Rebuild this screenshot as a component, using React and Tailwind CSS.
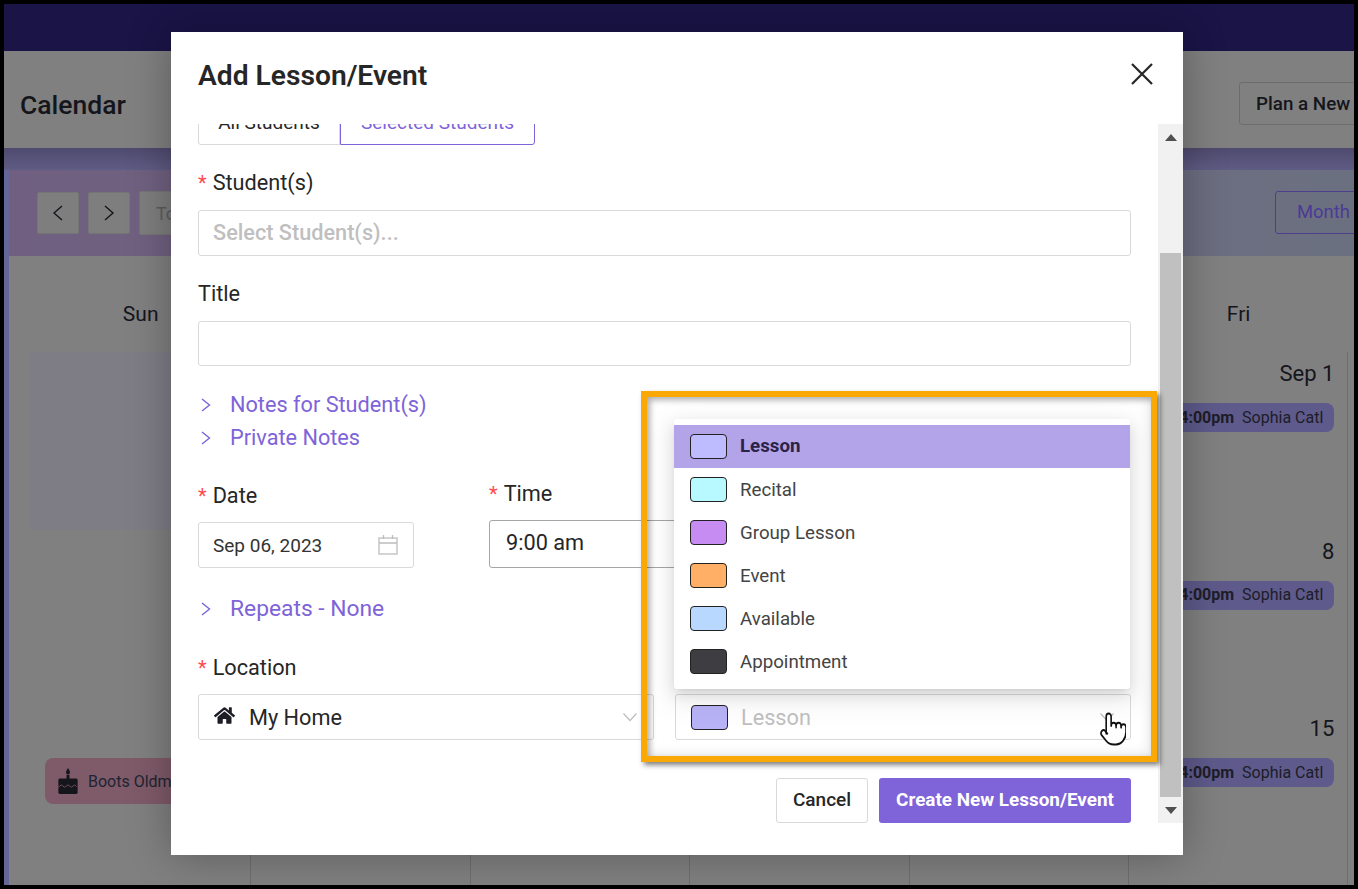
import React from 'react';
import { FaHome } from 'react-icons/fa';

const Chev = () => (
  <svg width="12" height="16" viewBox="0 0 12 16" fill="none" stroke="#7e63d9" strokeWidth="1.4" className="shrink-0"><path d="M2 2l7.5 6L2 14" /></svg>
);
const Down = ({ c = '#bdbdbd' }) => (
  <svg width="16" height="10" viewBox="0 0 16 10" fill="none" stroke={c} strokeWidth="1.2"><path d="M1.5 1.5L8 8.5l6.5-7" /></svg>
);
const Req = () => <span className="text-[#ff4d4f] mr-[6px] text-[20px]">*</span>;

const Fold = ({ children, cls }) => (
  <div className={`flex items-center h-[30px] pt-[2px] text-[#7e63d9] ${cls}`}>
    <span className="w-[32px] flex pl-[2px]"><Chev /></span>
    {children}
  </div>
);

const Pill = () => (
  <div className="ml-auto mr-[13px] mt-[16px] h-[29px] w-[200px] rounded-[8px] bg-[#5e5a8b] flex items-center justify-end pr-[11px] text-[16px] text-[#1d1d28] whitespace-nowrap overflow-hidden">
    <b className="font-bold mr-[8px]">4:00pm</b>Sophia Catl
  </div>
);

const Cake = () => (
  <svg width="22" height="26" viewBox="0 0 22 27" fill="#15151c" className="shrink-0">
    <path d="M11 0c1.6 2.4 2 3.6 2 4.6a2 2 0 0 1-4 0C9 3.6 9.4 2.4 11 0z" />
    <rect x="9.5" y="7" width="3" height="5" />
    <rect x="1" y="11" width="20" height="16" rx="1.5" />
    <path d="M1 20l3-2.5 3.5 2.5 3.5-2.5 3.5 2.5 3.5-2.5 2 2" fill="none" stroke="#7f5a68" strokeWidth="0.8" />
  </svg>
);

const Row = ({ color, label, active }) => (
  <div className={`h-[43px] flex items-center pl-[16px] text-[18.7px] ${active ? 'bg-[#b3a4ea] font-bold text-[#2b2347]' : 'text-[#444]'}`}>
    <span className="w-[37px] h-[25px] rounded-[4px] border border-[#222] mr-[13px]" style={{ background: color }} />
    <span className={active ? '' : 'pt-[2px]'}>{label}</span>
  </div>
);

const rows = [
  ['#bfbbff', 'Lesson', true],
  ['#b8f9ff', 'Recital'],
  ['#c78cf2', 'Group Lesson'],
  ['#ffb066', 'Event'],
  ['#b8d8ff', 'Available'],
  ['#3e3e42', 'Appointment'],
];

const Cell = ({ children, cls = '' }) => (
  <div className={`border-r border-[#6e6e6e] h-[177.6px] ${cls}`}>{children}</div>
);

export default function App() {
  return (
    <div className="relative w-[1358px] h-[889px] overflow-hidden border-4 border-black bg-[#808080] font-['Roboto',sans-serif]">
      {/* page behind the dialog */}
      <div className="h-[47px] bg-[#1a1447]" />
      <div className="h-[97px] bg-[#808080] flex items-center justify-between pl-[16px] pt-[7px] relative">
        <span className="text-[26.5px] font-medium text-[#15151c] pt-[4px]">Calendar</span>
        <div className="h-[43px] w-[130px] -mr-[15px] border border-[#6c6c6c] rounded-[3px] flex items-center pl-[16px] pt-[2px] text-[18.8px] font-medium text-[#15151c] whitespace-nowrap">Plan a New</div>
      </div>
      <div className="h-[22px] ml-0 bg-gradient-to-b from-[#4f4a6e] to-[#5f5c85]" />
      <div className="flex">
        <div className="w-[5px] bg-[#66659a]" />
        <div className="flex-1">
          <div className="h-[86px] bg-gradient-to-r from-[#705f80] to-[#6b7080] flex items-center pl-[28px] pr-0">
            <div className="w-[42px] h-[42px] bg-[#7e7e7e] border border-[#757575] rounded-[2px] flex items-center justify-center mr-[9px]">
              <svg width="14" height="18" viewBox="0 0 14 18" fill="none" stroke="#15151c" strokeWidth="1.4"><path d="M11 2L3 9l8 7" /></svg>
            </div>
            <div className="w-[42px] h-[42px] bg-[#7e7e7e] border border-[#757575] rounded-[2px] flex items-center justify-center mr-[9px]">
              <svg width="14" height="18" viewBox="0 0 14 18" fill="none" stroke="#15151c" strokeWidth="1.4"><path d="M3 2l8 7-8 7" /></svg>
            </div>
            <div className="w-[60px] h-[44px] bg-[#7e7e7e] border border-[#757575] rounded-[2px] flex items-center pl-[16px] text-[18px] text-[#5c5c5c]">To</div>
            <div className="ml-auto h-[43px] w-[84px] -mr-[5px] mb-[1px] border border-[#4d3f8c] rounded-[3px] flex items-center pl-[21px] pb-[2px] text-[18.4px] text-[#4b3a96]">Month</div>
          </div>
          <div className="pl-[21px]">
            <div className="grid grid-cols-[221.4px_repeat(5,219.4px)] h-[96px] text-[21px] leading-[24px] text-[#15151c] text-center pt-[46px]">
              <span>Sun</span><span /><span /><span /><span /><span>Fri</span>
            </div>
            <div className="grid grid-cols-[221.4px_repeat(5,219.4px)]">
              <Cell cls="bg-[#7e7c85]" /><Cell /><Cell /><Cell /><Cell />
              <Cell><div className="text-right pr-[13px] text-[22px] leading-[26px] pt-[9px] text-[#15151c]">Sep 1</div><Pill /></Cell>
              <Cell /><Cell /><Cell /><Cell /><Cell />
              <Cell><div className="text-right pr-[13px] text-[22px] leading-[26px] pt-[9px] text-[#15151c]">8</div><Pill /></Cell>
              <Cell>
                <div className="h-[51px]" />
                <div className="ml-[15px] h-[46px] rounded-l-[8px] bg-[#7f5a68] flex items-center pl-[12px] text-[16px] text-[#1d2433] gap-[9px]"><Cake /><span className="pt-[2px]">Boots Oldm</span></div>
              </Cell>
              <Cell /><Cell /><Cell /><Cell />
              <Cell><div className="text-right pr-[13px] text-[22px] leading-[26px] pt-[9px] text-[#15151c]">15</div><Pill /></Cell>
            </div>
          </div>
        </div>
      </div>

      {/* dialog */}
      <div className="absolute left-[167px] top-[28px] w-[1012px] h-[823px] bg-white shadow-[0_0_40px_rgba(0,0,0,0.3)]">
        <div className="h-[92px] pl-[27px] pr-[30px] flex items-center justify-between">
          <h1 className="text-[28.2px] font-semibold text-[#262626] -mt-[4px]">Add Lesson/Event</h1>
          <svg width="22" height="22" viewBox="0 0 22 22" stroke="#262626" strokeWidth="2.2" className="-mt-[9px]"><path d="M1 1l20 20M21 1L1 21" /></svg>
        </div>
        <div className="flex h-[699px]">
          <div className="w-[987px] pl-[27px] pr-[27px] flex flex-col">
            <div className="flex-1 overflow-hidden min-h-0">
              <div className="-mt-[23px] text-[21.7px] text-[#262626]">
                <div className="flex h-[44px] text-[19px]">
                  <div className="w-[142px] border border-[#d9d9d9] rounded-l-[3px] flex items-center justify-center">All Students</div>
                  <div className="w-[195px] border border-[#7e63d9] rounded-r-[3px] flex items-center justify-center text-[#7e63d9]">Selected Students</div>
                </div>
                <div className="h-[24px] mt-[25px] pt-[2px] flex items-center"><Req />Student(s)</div>
                <div className="h-[46px] mt-[16px] border border-[#d9d9d9] rounded-[3px] flex items-center pl-[14px] text-[#bfbfbf] font-medium">Select Student(s)...</div>
                <div className="h-[24px] mt-[25px] pt-[2px] flex items-center">Title</div>
                <div className="h-[45px] mt-[16px] border border-[#d9d9d9] rounded-[3px]" />
                <Fold cls="mt-[23px]">Notes for Student(s)</Fold>
                <Fold cls="mt-[3px]">Private Notes</Fold>
                <div className="flex items-start mt-[29px]">
                  <div className="w-[216px] mt-[2px]">
                    <div className="h-[24px] pt-[2px] flex items-center"><Req />Date</div>
                    <div className="h-[46px] mt-[15px] border border-[#d9d9d9] rounded-[3px] flex items-center justify-between pl-[14px] pr-[15px] text-[19px] text-[#333]">
                      <span className="pt-[2px]">Sep 06, 2023</span>
                      <svg width="20" height="20" viewBox="0 0 20 20" fill="none" stroke="#bdbdbd" strokeWidth="1.3"><rect x="1" y="3" width="18" height="16" /><path d="M1 8h18M5.5 0v4M14.5 0v4" /></svg>
                    </div>
                  </div>
                  <div className="ml-[75px] w-[300px]">
                    <div className="h-[24px] pt-[2px] flex items-center"><Req />Time</div>
                    <div className="h-[48px] mt-[15px] border border-[#a6a6a6] rounded-[3px] flex items-center pl-[16px] pb-[2px]">9:00 am</div>
                  </div>
                </div>
                <Fold cls="mt-[25px] text-[22.8px]">Repeats - None</Fold>
                <div className="h-[24px] mt-[32px] pt-[2px] flex items-center"><Req />Location</div>
                <div className="flex gap-[21px] mt-[15px]">
                  <div className="w-[456px] h-[46px] border border-[#d9d9d9] rounded-[3px] flex items-center pl-[15px] pr-[15px]">
                    <FaHome className="text-[#1d1d28] text-[21px] mr-[14px] -mt-[4px]" />
                    <span className="pt-[2px]">My Home</span>
                    <span className="ml-auto"><Down /></span>
                  </div>
                  <div className="w-[456px] h-[46px] border border-[#d9d9d9] rounded-[3px] flex items-center pl-[15px] pr-[15px] text-[#bfbfbf]">
                    <span className="w-[37px] h-[25px] rounded-[4px] border border-[#222] bg-[#b8b3f6] mr-[13px]" />
                    <span className="pt-[2px]">Lesson</span>
                    <span className="ml-auto"><Down /></span>
                  </div>
                </div>
              </div>
            </div>
            <div className="h-[45px] flex justify-end gap-[11px] shrink-0">
              <div className="w-[92px] border border-[#d9d9d9] rounded-[3px] flex items-center justify-center text-[19px] font-medium text-[#262626]">Cancel</div>
              <div className="w-[252px] bg-[#7e63d9] rounded-[3px] flex items-center justify-center text-[18.9px] font-bold text-white">Create New Lesson/Event</div>
            </div>
          </div>
          <div className="w-[25px] bg-[#f1f1f1] flex flex-col items-center justify-between relative">
            <div className="h-[26px] flex items-center justify-center pr-[0px]"><span className="w-0 h-0 border-x-[6px] border-x-transparent border-b-[7px] border-b-[#505050]" /></div>
            <div className="absolute left-[2px] right-[2px] top-[129px] h-[544px] bg-[#c0c0c0]" />
            <div className="h-[26px] flex items-center justify-center"><span className="w-0 h-0 border-x-[6px] border-x-transparent border-t-[7px] border-t-[#505050]" /></div>
          </div>
        </div>

        {/* dropdown */}
        <div className="absolute left-[503px] top-[387px] w-[456px] h-[270px] py-[6px] bg-white rounded-[3px] shadow-[0_6px_16px_rgba(0,0,0,0.12),0_3px_6px_-4px_rgba(0,0,0,0.14),0_9px_28px_8px_rgba(0,0,0,0.05)]">
          {rows.map(([c, l, a]) => <Row key={l} color={c} label={l} active={a} />)}
        </div>
        {/* annotation frame */}
        <div className="absolute left-[470px] top-[359px] w-[516px] h-[371px] border-[6px] border-[#f9a806] shadow-[3px_3px_5px_rgba(0,0,0,0.5),inset_3px_3px_6px_rgba(0,0,0,0.3),inset_-3px_-3px_12px_rgba(0,0,0,0.08)]" />
        {/* cursor */}
        <svg width="26" height="34" viewBox="2 1 21 22" preserveAspectRatio="none" fill="#fff" stroke="#111" strokeWidth="1.3" strokeLinecap="round" strokeLinejoin="round" className="absolute left-[929px] top-[680px]">
          <path d="M18 11a2 2 0 1 1 4 0v3a8 8 0 0 1-8 8h-2c-2.8 0-4.5-.86-5.99-2.34l-3.6-3.6a2 2 0 0 1 2.83-2.82L7 15" transform="translate(1 0)" />
          <path d="M7 15V4a2 2 0 0 1 4 0v6h8v4H7z" stroke="none" />
          <path d="M11 9.5V4a2 2 0 0 0-2-2a2 2 0 0 0-2 2v11M11 10a2 2 0 0 1 4 0M15 10v1M15 10a2 2 0 0 1 4 0v1" />
        </svg>
      </div>
    </div>
  );
}
